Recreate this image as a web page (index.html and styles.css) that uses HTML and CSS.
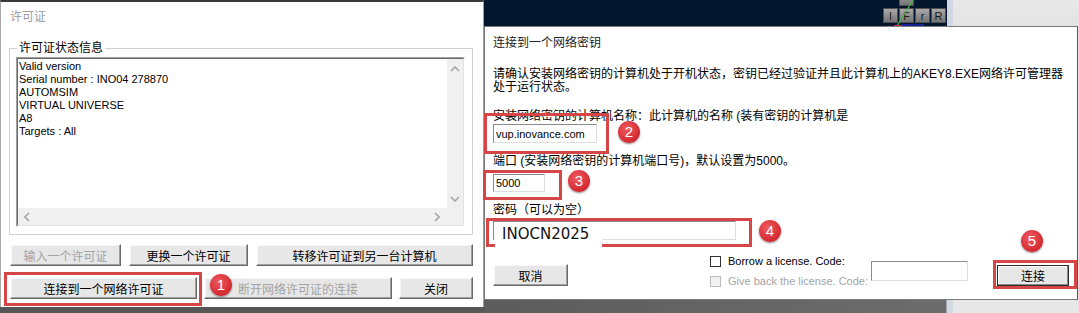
FILE: index.html
```html
<!DOCTYPE html>
<html lang="zh-CN">
<head>
    <meta charset="UTF-8">
    <meta name="viewport" content="width=device-width, initial-scale=1.0">
    <title>许可证</title>
    <link rel="stylesheet" href="styles.css">
</head>
<body>

<div class="screen">

    <!-- left window: licence status -->
    <div class="license-dlg">
        <div class="dlg-title">许可证</div>

        <div class="group">
            <span class="group-label">许可证状态信息</span>
            <div class="status-box">
                <div class="status-inner">
                    <div class="status-text">
                        <div>Valid version</div>
                        <div>Serial number : INO04 278870</div>
                        <div>AUTOMSIM</div>
                        <div>VIRTUAL UNIVERSE</div>
                        <div>A8</div>
                        <div>Targets : All</div>
                    </div>
                    <div class="vscroll">
                        <svg width="10" height="6" viewBox="0 0 10 6"><polyline points="1,5 5,1 9,5" /></svg>
                        <svg width="10" height="6" viewBox="0 0 10 6"><polyline points="1,1 5,5 9,1" /></svg>
                    </div>
                    <div class="hscroll">
                        <svg width="6" height="10" viewBox="0 0 6 10"><polyline points="5,1 1,5 5,9" /></svg>
                        <svg width="6" height="10" viewBox="0 0 6 10"><polyline points="1,1 5,5 1,9" /></svg>
                    </div>
                    <div class="corner"></div>
                </div>
            </div>
        </div>

        <div class="btn-row">
            <button class="btn w-import" disabled>输入一个许可证</button>
            <button class="btn w-change">更换一个许可证</button>
            <button class="btn w-transfer">转移许可证到另一台计算机</button>
        </div>
        <div class="btn-row row-2">
            <button class="btn w-connect">连接到一个网络许可证</button>
            <button class="btn w-disconnect" disabled>断开网络许可证的连接</button>
            <button class="btn w-close">关闭</button>
        </div>
    </div>

    <!-- right side: 3D view behind, network key dialog in front -->
    <div class="right-col">
        <div class="top-strip">
            <div class="viewport">
                <div class="cube-btn cube-top"></div>
                <div class="cube-row">
                    <span class="cube-btn">I</span>
                    <span class="cube-btn">F</span>
                    <span class="cube-btn">r</span>
                    <span class="cube-btn">R</span>
                </div>
                <svg class="axes" width="463" height="26" viewBox="0 0 463 26">
                    <line x1="413" y1="26" x2="429" y2="0" stroke="#43b54c" stroke-width="1.2" />
                    <line x1="418" y1="25" x2="440" y2="25" stroke="#2233ff" stroke-width="1" />
                    <line x1="410" y1="25.5" x2="418" y2="25.5" stroke="#c0303a" stroke-width="1" />
                </svg>
            </div>
            <div class="frame-edge"></div>
            <div class="top-gray"></div>
        </div>

        <div class="net-dlg">
            <div class="net-title">连接到一个网络密钥</div>
            <p class="net-text">请确认安装网络密钥的计算机处于开机状态，密钥已经过验证并且此计算机上的AKEY8.EXE网络许可管理器<br>处于运行状态。</p>

            <div class="net-label first">安装网络密钥的计算机名称：此计算机的名称 (装有密钥的计算机是</div>
            <input class="field f-host" type="text" value="vup.inovance.com" readonly>

            <div class="net-label">端口 (安装网络密钥的计算机端口号)，默认设置为5000。</div>
            <input class="field f-port" type="text" value="5000" readonly>

            <div class="net-label">密码（可以为空）</div>
            <input class="field f-pass" type="text" value="" readonly>

            <div class="net-actions">
                <button class="btn w-cancel">取消</button>
                <div class="checks">
                    <div class="check-row"><span class="check"></span>Borrow a license. Code:</div>
                    <div class="check-row disabled"><span class="check"></span>Give back the license. Code:</div>
                </div>
                <input class="field f-code" type="text" value="" readonly>
                <button class="btn btn-default w-ok">连接</button>
            </div>
        </div>
    </div>

    <!-- annotations pasted over the screenshots -->
    <div class="mark mark-1"></div>
    <div class="mark mark-2"></div>
    <div class="mark mark-3"></div>
    <div class="mark mark-4"></div>
    <div class="mark mark-5"></div>
    <div class="pass-patch">INOCN2025</div>

    <div class="badge badge-1">1</div>
    <div class="badge badge-2">2</div>
    <div class="badge badge-3">3</div>
    <div class="badge badge-4">4</div>
    <div class="badge badge-5">5</div>

</div>

</body>
</html>
```

FILE: styles.css
```css
body {
    margin: 0;
    background-color: #565656;
    font-family: "Liberation Sans", "Noto Sans CJK SC", sans-serif;
    font-size: 12px;
    color: #000;
}

.screen {
    position: relative;
    display: flex;
    width: 1079px;
    height: 313px;
    overflow: hidden;
}

/* ---------- left window ---------- */

.license-dlg {
    box-sizing: border-box;
    width: 484px;
    height: 307px;
    flex-shrink: 0;
    background-color: #fff;
    border-top: 2px solid #3a3a3a;
    border-left: 1px solid #a8a8a8;
    border-right: 1px solid #9a9a9a;
}

.dlg-title {
    height: 30px;
    line-height: 31px;
    padding-left: 9px;
    color: #9c9c9c;
}

.group {
    position: relative;
    box-sizing: border-box;
    width: 464px;
    height: 187px;
    margin: 16px 0 0 8px;
    padding: 8px 7px 0 6px;
    border: 1px solid #d2d2d2;
}

.group-label {
    position: absolute;
    top: -9px;
    left: 7px;
    padding: 0 2px;
    line-height: 16px;
    background-color: #fff;
}

.status-box {
    box-sizing: border-box;
    width: 449px;
    height: 170px;
    border: 1px solid;
    border-color: #a0a0a0 #fff #fff #a0a0a0;
}

.status-inner {
    box-sizing: border-box;
    height: 100%;
    border: 1px solid;
    border-color: #696969 #e3e3e3 #e3e3e3 #696969;
    display: grid;
    grid-template-columns: 1fr 16px;
    grid-template-rows: 1fr 17px;
    background-color: #fff;
}

.status-text {
    padding: 1px 0 0 1px;
    font-size: 11px;
    line-height: 13px;
}

.vscroll,
.hscroll,
.corner {
    background-color: #f0f0f0;
}

.vscroll {
    display: flex;
    flex-direction: column;
    justify-content: space-between;
    align-items: center;
    padding: 7px 0 6px;
}

.hscroll {
    display: flex;
    justify-content: space-between;
    align-items: center;
    padding: 0 7px 0 6px;
}

.vscroll svg,
.hscroll svg {
    fill: none;
    stroke: #a6a6a6;
    stroke-width: 1.6;
}

.btn-row {
    display: flex;
    gap: 8px;
    margin: 9px 0 0 9px;
}

.btn-row.row-2 {
    gap: 7px;
    margin-top: 11px;
}

.btn {
    box-sizing: border-box;
    height: 22px;
    padding: 0;
    font-family: inherit;
    font-size: 12px;
    color: #000;
    background-color: #e7e7e7;
    border: 1px solid;
    border-color: #fff #696969 #696969 #fff;
    box-shadow: inset -1px -1px #a0a0a0, inset 1px 1px #f7f7f7;
}

.btn:disabled {
    color: #a3a3a3;
}

.w-import { width: 111px; }
.w-change { width: 119px; }
.w-transfer { width: 217px; }
.w-connect { width: 187px; }
.w-disconnect { width: 188px; }
.w-close { width: 74px; }

/* ---------- right side ---------- */

.right-col {
    flex: 1;
    display: flex;
    flex-direction: column;
    background: linear-gradient(to right, #5c5c5c 0, #6c6c6c 462px, #d3dae3 463px, #d3dae3 469px, #e7e7e7 469px);
}

.top-strip {
    display: flex;
    height: 26px;
}

.viewport {
    position: relative;
    width: 463px;
    background-color: #04152e;
    overflow: hidden;
}

.frame-edge {
    width: 6px;
    background-color: #cfd7e2;
}

.top-gray {
    flex: 1;
    background: linear-gradient(#e9e9e9, #e3e3e3);
}

.cube-row {
    position: absolute;
    left: 399px;
    top: 8px;
    display: flex;
    gap: 1px;
}

.cube-btn {
    box-sizing: border-box;
    width: 15px;
    height: 15px;
    line-height: 14px;
    text-align: center;
    font-size: 11px;
    color: #1a1a1a;
    background: linear-gradient(#a9a9a9, #747474);
    border: 1px solid #505050;
}

.cube-top {
    position: absolute;
    left: 415px;
    top: -9px;
}

.axes {
    position: absolute;
    left: 0;
    top: 0;
}

.net-dlg {
    box-sizing: border-box;
    width: 594px;
    height: 274px;
    padding: 0 8px;
    background-color: #fff;
    border: 1px solid #7c7c7c;
    border-right-color: #555;
}

.net-title {
    margin-top: 9px;
    line-height: 14px;
    color: #222;
}

.net-text {
    margin: 18px 0 0;
    line-height: 13px;
    white-space: nowrap;
}

.net-label {
    margin-top: 12px;
    line-height: 13px;
    white-space: nowrap;
}

.net-label.first {
    margin-top: 16px;
}

.field {
    display: block;
    box-sizing: border-box;
    margin: 0;
    padding: 0 2px;
    font-family: inherit;
    font-size: 11px;
    color: #000;
    background-color: #fff;
    border: 1px solid;
    border-color: #8a8a8a #dedede #dedede #8a8a8a;
    outline: none;
}

.f-host {
    width: 104px;
    height: 19px;
    margin-top: 1px;
}

.f-port {
    width: 52px;
    height: 18px;
    margin-top: 6px;
}

.f-pass {
    width: 243px;
    height: 19px;
    margin-top: 4px;
}

.net-actions {
    display: flex;
    align-items: flex-start;
    height: 33px;
    margin-top: 15px;
}

.w-cancel {
    width: 75px;
    margin-top: 9px;
}

.checks {
    width: 161px;
    margin-left: 142px;
    display: flex;
    flex-direction: column;
    gap: 7px;
    font-size: 11px;
}

.check-row {
    display: flex;
    align-items: center;
    gap: 7px;
    line-height: 13px;
    white-space: nowrap;
}

.check {
    box-sizing: border-box;
    width: 11px;
    height: 11px;
    background-color: #fff;
    border: 1px solid #333;
}

.check-row.disabled {
    color: #a5a5a5;
}

.check-row.disabled .check {
    background-color: #f1f1f1;
    border-color: #bcbcbc;
}

.f-code {
    width: 97px;
    height: 20px;
    margin-top: 6px;
}

.w-ok {
    width: 72px;
    height: 21px;
    margin: 10px 0 0 29px;
}

.btn-default {
    border-color: #2b2b2b;
    box-shadow: inset -1px -1px #8a8a8a, inset 1px 1px #fff;
}

/* ---------- annotations ---------- */

.mark {
    position: absolute;
    box-sizing: border-box;
    border: 3px solid #d64646;
}

.mark-1 { left: 4px; top: 272px; width: 198px; height: 34px; }
.mark-2 { left: 484px; top: 113px; width: 125px; height: 41px; }
.mark-3 { left: 483px; top: 170px; width: 79px; height: 30px; }
.mark-4 { left: 486px; top: 218px; width: 266px; height: 29px; }
.mark-5 { left: 993px; top: 260px; width: 84px; height: 29px; }

.pass-patch {
    position: absolute;
    left: 495px;
    top: 223px;
    width: 107px;
    height: 25px;
    padding-left: 7px;
    box-sizing: border-box;
    line-height: 23px;
    background-color: #fff;
    font-family: "DejaVu Sans", sans-serif;
    font-size: 15px;
    color: #111;
}

.badge {
    position: absolute;
    width: 22px;
    height: 22px;
    border-radius: 50%;
    background: radial-gradient(circle at 40% 35%, #ee5a5f 0, #d62c34 65%, #c0222a 100%);
    box-shadow: 0 1px 2px rgba(0, 0, 0, 0.45);
    color: #fff;
    font-size: 15px;
    line-height: 22px;
    text-align: center;
}

.badge-1 { left: 210px; top: 274px; }
.badge-2 { left: 618px; top: 121px; }
.badge-3 { left: 568px; top: 170px; }
.badge-4 { left: 759px; top: 220px; }
.badge-5 { left: 1021px; top: 230px; }
```
